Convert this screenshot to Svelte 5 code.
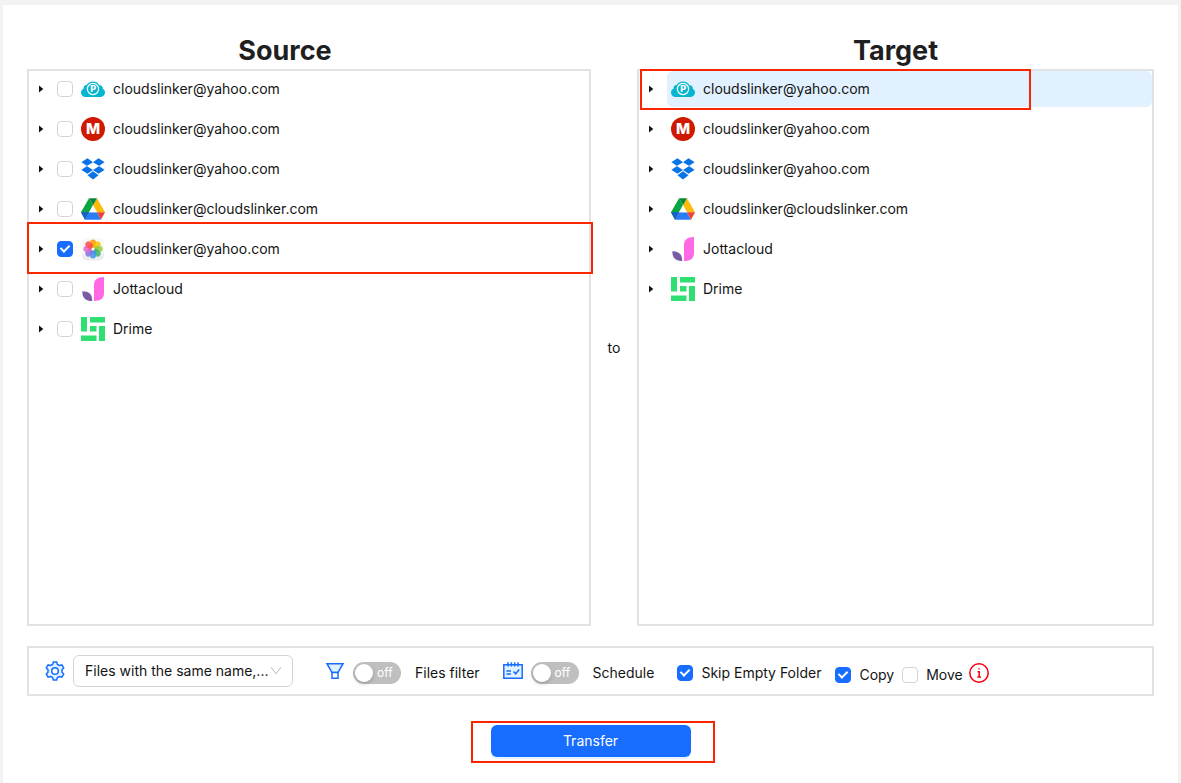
<script lang="ts">
    interface Account {
        icon: string;
        name: string;
        checked?: boolean;
    }

    let source: Account[] = $state([
        { icon: 'pcloud', name: 'cloudslinker@yahoo.com' },
        { icon: 'mega', name: 'cloudslinker@yahoo.com' },
        { icon: 'dropbox', name: 'cloudslinker@yahoo.com' },
        { icon: 'gdrive', name: 'cloudslinker@cloudslinker.com' },
        { icon: 'photos', name: 'cloudslinker@yahoo.com', checked: true },
        { icon: 'jotta', name: 'Jottacloud' },
        { icon: 'drime', name: 'Drime' },
    ]);
    const target: Account[] = source.filter(a => a.icon !== 'photos');

    const petals = [
        '#ff9500', '#f7c600', '#8fce3a', '#3cb371',
        '#3a96ee', '#8a6fe0', '#e067c8', '#ff4b4b',
    ];

    let selected = $state(0);
    let filter = $state(false);
    let schedule = $state(false);
    let skipEmpty = $state(true);
    let copy = $state(true);
    let move = $state(false);
</script>

{#snippet logo(name: string)}
    <svg class="logo" viewBox="0 0 24 24" aria-hidden="true">
        {#if name === 'pcloud'}
            <path fill="#06b6d0" d="M4.500 20C2 20 0 18 0 15.500C0 13.600 1 12 2.700 11.400C2.300 9.500 3.800 7.900 5.700 8.100C6.800 5.800 9.200 4.500 12 4.500C15 4.500 17.400 6 18.400 8.300C20.500 8.100 22 9.700 21.800 11.700C23.200 12.400 24 13.800 24 15.600C24 18 22.200 20 19.800 20Z"/>
            <circle cx="12" cy="12" r="5.600" fill="none" stroke="#fff" stroke-width="1.200"/>
            <text x="12.200" y="15.200" text-anchor="middle" font-size="9" font-weight="800" fill="#fff">P</text>
        {:else if name === 'mega'}
            <circle cx="12" cy="12" r="12" fill="#cf1900"/>
            <text x="12" y="17.200" text-anchor="middle" font-size="15" font-weight="800" fill="#fff">M</text>
        {:else if name === 'dropbox'}
            <path fill="#0773e6" d="M6.500 1.200 12 5.200 5.700 9 0.200 5.200ZM17.500 1.200 23.800 5.200 18.300 9 12 5.200ZM0.200 12.800 5.700 9 12 12.900 6.500 16.800ZM18.300 9 23.800 12.800 17.500 16.800 12 12.900ZM6.500 18.200 12 14.200 17.500 18.200 12 22.600Z"/>
            <path stroke="#fff" stroke-width=".5" fill="none" d="M0 5.100 5.700 9 0 12.900M24 5.100 18.300 9 24 12.900"/>
        {:else if name === 'gdrive'}
            <path fill="#08a541" d="M8 1.300 12 8.200 4 22.700 0 15.200Z"/>
            <path fill="#ffba08" d="M16 1.300 24 15.200H16L12 8.200Z"/>
            <path fill="#0b8439" d="M8 1.300H16L12 8.200Z"/>
            <path fill="#2a7cf5" d="M4 22.700 8 15.200H16L20 22.700Z"/>
            <path fill="#175fc9" d="M0 15.200H8L4 22.700Z"/>
            <path fill="#ea4335" d="M16 15.200H24L20 22.700Z"/>
            <path fill="#fff" d="M12 8.200 8 15.200H16Z"/>
        {:else if name === 'photos'}
            <rect x="1" y="1" width="22" height="22.500" rx="5" fill="#ececec"/>
            <rect x="1" y="1" width="22" height="18" rx="5" fill="#f8f8f8"/>
            {#each petals as color, i}
                <rect x="9" y="2.400" width="6" height="8.600" rx="3" fill={color} fill-opacity=".85" transform="rotate({i * 45} 12 12)"/>
            {/each}
            <circle cx="12" cy="12" r="1.500" fill="#fff"/>
        {:else if name === 'jotta'}
            <path fill="#ff69e6" d="M23 0V16C23 21 20 24 13 24V8C13 3 16 0 23 0Z"/>
            <path fill="#7a5ba6" d="M1.300 14.200C8 14.200 11.200 17 11.200 24C4.500 24 1.300 21 1.300 14.200Z"/>
        {:else}
            <path fill="#2fdf72" d="M0 0H6V14.500H0ZM9 0H24V5.500H9ZM18 9H24V24H18ZM0 18.500H15.500V24H0ZM9 9H15.500V14.500H9Z"/>
        {/if}
    </svg>
{/snippet}

{#snippet expander()}
    <button class="expander" aria-label="Expand">
        <svg viewBox="0 0 24 24" aria-hidden="true"><path d="M10 8.500 14.300 12 10 15.500Z"/></svg>
    </button>
{/snippet}

<main>
    <div class="trees">
        <section class="source">
            <h1>Source</h1>
            <ul class="tree">
                {#each source as account}
                    <li class="node">
                        {@render expander()}
                        <label class="account">
                            <input type="checkbox" bind:checked={account.checked}>
                            {@render logo(account.icon)}
                            {account.name}
                        </label>
                        {#if account.checked}
                            <span class="mark mark-source"></span>
                        {/if}
                    </li>
                {/each}
            </ul>
        </section>
        <div class="to">to</div>
        <section>
            <h1>Target</h1>
            <ul class="tree">
                {#each target as account, i}
                    <li class="node">
                        {@render expander()}
                        <button class="account pick" class:selected={i === selected} onclick={() => selected = i}>
                            {@render logo(account.icon)}
                            {account.name}
                        </button>
                        {#if i === selected}
                            <span class="mark mark-target"></span>
                        {/if}
                    </li>
                {/each}
            </ul>
        </section>
    </div>

    <div class="toolbar">
        <svg class="tool" viewBox="0 0 20 20" aria-hidden="true">
            <path d="M8.300 1H11.700L12.400 3.400 14.400 4.500 16.900 3.900 18.700 6.900 17 8.800V11.200L18.700 13.100 16.900 16.100 14.400 15.500 12.400 16.600 11.700 19H8.300L7.600 16.600 5.600 15.500 3.100 16.100 1.300 13.100 3 11.200V8.800L1.300 6.900 3.100 3.900 5.600 4.500 7.600 3.400Z"/>
            <circle cx="10" cy="10" r="3.300" class="hole"/>
        </svg>
        <div class="select">
            <select aria-label="Conflict rule">
                <option>Files with the same name,...</option>
            </select>
            <svg viewBox="0 0 12 12" aria-hidden="true"><path d="M1 2 6 9 11 2"/></svg>
        </div>

        <div class="option filter">
            <svg class="tool" viewBox="0 0 20 20" aria-hidden="true">
                <path d="M2 2.700H18L13 11.500H7Z"/>
                <path d="M7 11.500H13V17.300H7Z" class="hole"/>
            </svg>
            <label class="low">
                <span class="switch">
                    <input type="checkbox" role="switch" bind:checked={filter}>
                    <span>{filter ? 'on' : 'off'}</span>
                </span>
                Files filter
            </label>
        </div>

        <div class="option schedule">
            <svg class="tool" viewBox="0 0 20 20" aria-hidden="true">
                <path d="M.8 3.700H19.200V17.300H.8Z"/>
                <path d="M5 1.200V5.500M8.400 1.200V5.500M11.700 1.200V5.500M15 1.200V5.500M3.500 10H8M3.500 13H8M10.500 10.500 12.700 12.800 16.200 8.500" fill="none"/>
            </svg>
            <label class="low">
                <span class="switch">
                    <input type="checkbox" role="switch" bind:checked={schedule}>
                    <span>{schedule ? 'on' : 'off'}</span>
                </span>
                Schedule
            </label>
        </div>

        <label class="check low skip">
            <input type="checkbox" bind:checked={skipEmpty}>
            Skip Empty Folder
        </label>
        <div class="mode">
            <label class="check">
                <input type="checkbox" bind:checked={copy}>
                Copy
            </label>
            <label class="check">
                <input type="checkbox" bind:checked={move}>
                Move
            </label>
        </div>
        <button class="info low" aria-label="Info">
            <svg viewBox="0 0 20 20" aria-hidden="true">
                <circle cx="10" cy="10" r="9.200"/>
                <path d="M8.500 8.700H10.200V14M8.300 14H12M10 5.200V6.600"/>
            </svg>
        </button>
    </div>

    <div class="actions">
        <div class="frame">
            <button class="transfer">Transfer</button>
        </div>
    </div>
</main>

<style>
:global(body) {
    margin: 0;
    background: #f2f2f2;
}
main {
    box-sizing: border-box;
    min-height: calc(100vh - 5px);
    margin: 5px 3px 0;
    padding: 28px 24px 20px;
    background: #fff;
    color: #141414;
    font: 14px/22px Inter, "Liberation Sans", sans-serif;
}
.trees {
    display: grid;
    grid-template-columns: 564fr 46px 517fr;
}
h1 {
    margin: 0;
    color: #1f1f1f;
    font-size: 27px;
    line-height: 36px;
    font-weight: 700;
    text-align: center;
}
.source h1 {
    padding-right: 48px;
}
.tree {
    box-sizing: border-box;
    min-height: 557px;
    margin: 0;
    padding: 0;
    border: 2px solid #e1e1e6;
    list-style: none;
}
.to {
    align-self: center;
    padding-top: 36px;
    text-align: center;
}
.node {
    position: relative;
    display: flex;
    align-items: center;
    height: 36px;
    margin-bottom: 4px;
}
button {
    padding: 0;
    border: 0;
    background: none;
    color: inherit;
    font: inherit;
    cursor: pointer;
}
.expander {
    width: 24px;
    height: 24px;
    margin-right: 4px;
}
.expander svg {
    display: block;
    fill: #111;
}
.account {
    display: flex;
    flex: 1;
    align-items: center;
    gap: 8px;
    height: 36px;
}
.pick {
    padding-left: 4px;
    border-radius: 6px;
    text-align: left;
}
.pick.selected {
    background: #e1f1ff;
}
.logo {
    flex: none;
    width: 24px;
    height: 24px;
}
.mark {
    position: absolute;
    border: 2px solid #fb2500;
    pointer-events: none;
}
.mark-source {
    inset: -9px -4px -7px -2px;
}
.mark-target {
    inset: -2px 121px -3px 1px;
}

input {
    flex: none;
    margin: 0;
    appearance: none;
}
.account input,
.check input {
    position: relative;
    box-sizing: border-box;
    width: 16px;
    height: 16px;
    border: 1px solid #d4d4d4;
    border-radius: 4px;
    background: #fff;
}
.account input:checked,
.check input:checked {
    border-color: #166dff;
    background: #166dff;
}
.account input:checked::after,
.check input:checked::after {
    content: '';
    position: absolute;
    left: 4px;
    top: 1px;
    width: 4px;
    height: 7px;
    border: solid #fff;
    border-width: 0 2px 2px 0;
    transform: rotate(45deg);
}

.toolbar {
    display: flex;
    align-items: center;
    box-sizing: border-box;
    min-height: 50px;
    margin-top: 20px;
    padding: 0 16px;
    border: 2px solid #e1e1e6;
    white-space: nowrap;
}
.tool {
    flex: none;
    width: 20px;
    height: 20px;
    fill: #e1f1ff;
    stroke: #166dff;
    stroke-width: 1.5;
}
.tool .hole {
    fill: #fff;
}
.select {
    position: relative;
    width: 220px;
    margin-left: 8px;
}
select {
    display: block;
    width: 100%;
    height: 32px;
    padding: 0 24px 0 11px;
    border: 1px solid #d4d4d4;
    border-radius: 6px;
    background: #fff;
    color: inherit;
    font: inherit;
    appearance: none;
}
.select svg {
    position: absolute;
    right: 11px;
    top: 10px;
    width: 12px;
    height: 12px;
    fill: none;
    stroke: #bfbfbf;
    pointer-events: none;
}
.option {
    display: flex;
    align-items: center;
    gap: 8px;
}
.filter {
    margin-left: 32px;
}
.schedule {
    margin-left: 23px;
}
.option label {
    display: flex;
    align-items: center;
    gap: 14px;
}
.low {
    padding-top: 4px;
}
.switch {
    position: relative;
    width: 48px;
    height: 22px;
    border-radius: 11px;
    background: #bfbfbf;
    color: #fff;
    font-size: 12px;
}
.switch input {
    position: absolute;
    left: 2px;
    top: 2px;
    width: 18px;
    height: 18px;
    border-radius: 50%;
    background: #fff;
    box-shadow: 0 2px 4px rgba(0, 35, 11, 0.2);
}
.switch span {
    display: block;
    padding-left: 24px;
}
.switch:has(:checked) {
    background: #166dff;
}
.switch input:checked {
    left: 28px;
}
.switch input:checked + span {
    padding-left: 8px;
}
.check {
    display: flex;
    align-items: center;
    gap: 8px;
}
.skip {
    margin-left: 23px;
}
.mode {
    display: flex;
    gap: 8px;
    margin-left: 14px;
    padding-top: 8px;
}
.info {
    margin-left: 6px;
}
.info svg {
    display: block;
    width: 20px;
    height: 20px;
    fill: none;
    stroke: #f5000f;
    stroke-width: 1.5;
}

.actions {
    display: flex;
    justify-content: center;
    margin-top: 25px;
    padding-left: 4px;
}
.frame {
    padding: 2px 22px 4px 18px;
    border: 2px solid #fb2500;
}
.transfer {
    display: block;
    width: 200px;
    height: 32px;
    border-radius: 6px;
    background: #166dff;
    color: #fff;
    box-shadow: 0 2px 0 rgba(5, 145, 255, 0.1);
}
</style>
